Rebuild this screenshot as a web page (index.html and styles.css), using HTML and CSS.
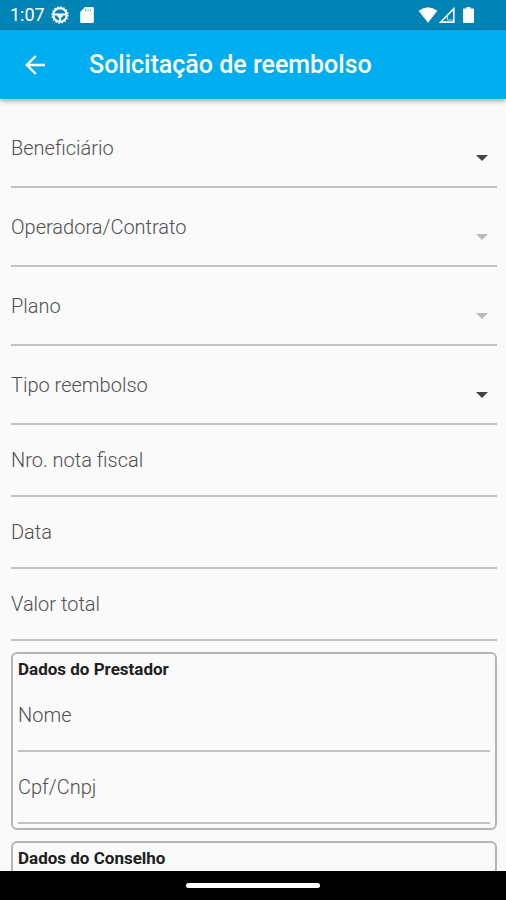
FILE: index.html
```html
<!DOCTYPE html>
<html lang="pt-BR">
<head>
<meta charset="utf-8">
<meta name="viewport" content="width=device-width, initial-scale=1">
<title>Solicitação de reembolso</title>
<link rel="stylesheet" href="styles.css">
</head>
<body>
<div class="status">
  <span class="time">1:07</span>
  <svg class="wheel" width="18" height="18" viewBox="0 0 18 18" fill="none" stroke="#fff" aria-hidden="true">
    <circle cx="9" cy="9" r="6.7" stroke-width="2"/>
    <circle cx="9" cy="9" r="8" stroke-width="1.4" stroke-dasharray="1.6 1.54"/>
    <path d="M2.5 8.6h13M9 9v6" stroke-width="2"/>
    <path d="M6.5 8h5v2.5l-1.5 1.5H8l-1.5-1.5z" fill="#fff" stroke="none"/>
  </svg>
  <svg class="card" width="14" height="16" viewBox="0 0 14 16" aria-hidden="true">
    <path d="M5 0h7.500q1.300 0 1.300 1.300v13.400q0 1.300-1.300 1.300h-11Q.2 16 .2 14.700V5z" fill="#fff"/>
    <path d="M5.500 2v2.500M8 2v2.500M10.500 2v2.500" stroke="#0083b5" stroke-opacity=".6"/>
  </svg>
  <span class="space"></span>
  <svg class="wifi" width="20" height="16" viewBox="0 0 20 16" aria-hidden="true">
    <path d="M.6 3.800Q10-3.200 19.400 3.800L10 15.800z" fill="#fff"/>
  </svg>
  <svg class="signal" width="16" height="16" viewBox="0 0 16 16" aria-hidden="true">
    <path d="M14.800 1.700v13.400H1.700z" fill="none" stroke="#fff" stroke-width="1.600"/>
    <path d="M8.500 8.500V13H14" fill="none" stroke="#fff" stroke-opacity=".7"/>
  </svg>
  <svg class="battery" width="11" height="16" viewBox="0 0 11 16" aria-hidden="true">
    <path d="M3.500 0h4v1.500H10q1 0 1 1V15q0 1-1 1H1q-1 0-1-1V2.500q0-1 1-1h2.500z" fill="#fff"/>
  </svg>
</div>
<header class="appbar">
  <button class="back" type="button" aria-label="Voltar">
    <svg width="20" height="20" viewBox="0 0 20 20" fill="none" stroke="#fff" stroke-width="2.400" aria-hidden="true">
      <path d="M20 10H2M10.800 1L1.800 10l9 9"/>
    </svg>
  </button>
  <h1 class="title">Solicitação de reembolso</h1>
</header>
<main class="content">
  <form class="form">
    <div class="field choice">
      <select id="beneficiario" required><option value="" hidden></option></select>
      <label for="beneficiario">Beneficiário</label>
      <svg class="caret" viewBox="0 0 12 6" aria-hidden="true"><path d="M0 0h12L6 6z"/></svg>
    </div>
    <div class="field choice">
      <select id="operadora" disabled><option value=""></option></select>
      <label for="operadora">Operadora/Contrato</label>
      <svg class="caret" viewBox="0 0 12 6" aria-hidden="true"><path d="M0 0h12L6 6z"/></svg>
    </div>
    <div class="field choice">
      <select id="plano" disabled><option value=""></option></select>
      <label for="plano">Plano</label>
      <svg class="caret" viewBox="0 0 12 6" aria-hidden="true"><path d="M0 0h12L6 6z"/></svg>
    </div>
    <div class="field choice">
      <select id="tipo" required><option value="" hidden></option></select>
      <label for="tipo">Tipo reembolso</label>
      <svg class="caret" viewBox="0 0 12 6" aria-hidden="true"><path d="M0 0h12L6 6z"/></svg>
    </div>
    <div class="field"><input id="nota" type="text" required><label for="nota">Nro. nota fiscal</label></div>
    <div class="field"><input id="data" type="text" required><label for="data">Data</label></div>
    <div class="field"><input id="valor" type="text" inputmode="decimal" required><label for="valor">Valor total</label></div>
    <section class="group">
      <h2>Dados do Prestador</h2>
      <div class="field"><input id="nome" type="text" required><label for="nome">Nome</label></div>
      <div class="field"><input id="cpf" type="text" required><label for="cpf">Cpf/Cnpj</label></div>
    </section>
    <section class="group">
      <h2>Dados do Conselho</h2>
    </section>
  </form>
</main>
<footer class="navbar"><span class="handle"></span></footer>
</body>
</html>
```
FILE: styles.css
```css
* { box-sizing: border-box; }

body {
  margin: 0;
  height: 100vh;
  display: flex;
  flex-direction: column;
  background: #fafafa;
  color: #202020;
  font-family: Roboto, sans-serif;
}

.status {
  flex: none;
  display: flex;
  align-items: center;
  height: 30px;
  padding: 0 32px 0 10px;
  background: #0083b5;
  color: #fff;
}
.time { font-size: 18px; line-height: 30px; }
.wheel { margin-left: 6px; }
.card { margin-left: 11px; }
.space { flex: 1; }
.signal { margin-left: 1px; }
.battery { margin-left: 8px; }

.appbar {
  flex: none;
  display: flex;
  align-items: center;
  gap: 35px;
  height: 69px;
  padding: 0 16px;
  background: #00aeef;
  color: #fff;
  box-shadow: 0 2px 5px rgba(0, 0, 0, .35);
  z-index: 1;
}
.back {
  display: grid;
  place-items: center;
  width: 38px;
  height: 38px;
  padding: 0;
  border: 0;
  background: none;
}
.title {
  margin: 0;
  font-size: 25px;
  font-weight: 500;
  line-height: 32px;
}

.content {
  flex: 1;
  min-height: 0;
  overflow-y: auto;
  scrollbar-width: none;
}
.form { padding: 10px 9px 10px 11px; }

.field {
  display: grid;
  height: 72px;
  border-bottom: 2px solid #c2c2c2;
}
.field > * { grid-area: 1 / 1; }
.field input,
.field select {
  appearance: none;
  width: 100%;
  padding: 16px 0 0;
  border: 0;
  outline: 0;
  background: none;
  color: #202020;
  font: inherit;
  font-size: 20px;
}
.field label {
  align-self: center;
  justify-self: start;
  color: #505050;
  font-size: 20px;
  font-weight: 300;
  line-height: 24px;
  pointer-events: none;
}
.field :focus + label,
.field :valid + label {
  align-self: start;
  font-size: 14px;
}
.choice { height: 79px; }
.caret {
  align-self: center;
  justify-self: end;
  width: 12px;
  height: 6px;
  margin: 20px 9px 0 0;
  fill: #424242;
  pointer-events: none;
}
.field select:disabled ~ .caret { fill: #bababa; }

.group {
  margin-top: 11px;
  padding: 4px 5px;
  border: 2px solid #b5b5b5;
  border-radius: 6px;
}
.group h2 {
  margin: 0;
  font-size: 17px;
  font-weight: 700;
  line-height: 22px;
}

.navbar {
  flex: none;
  display: grid;
  place-items: center;
  height: 29px;
  background: #000;
}
.handle {
  width: 134px;
  height: 5px;
  border-radius: 3px;
  background: #fff;
}
```
